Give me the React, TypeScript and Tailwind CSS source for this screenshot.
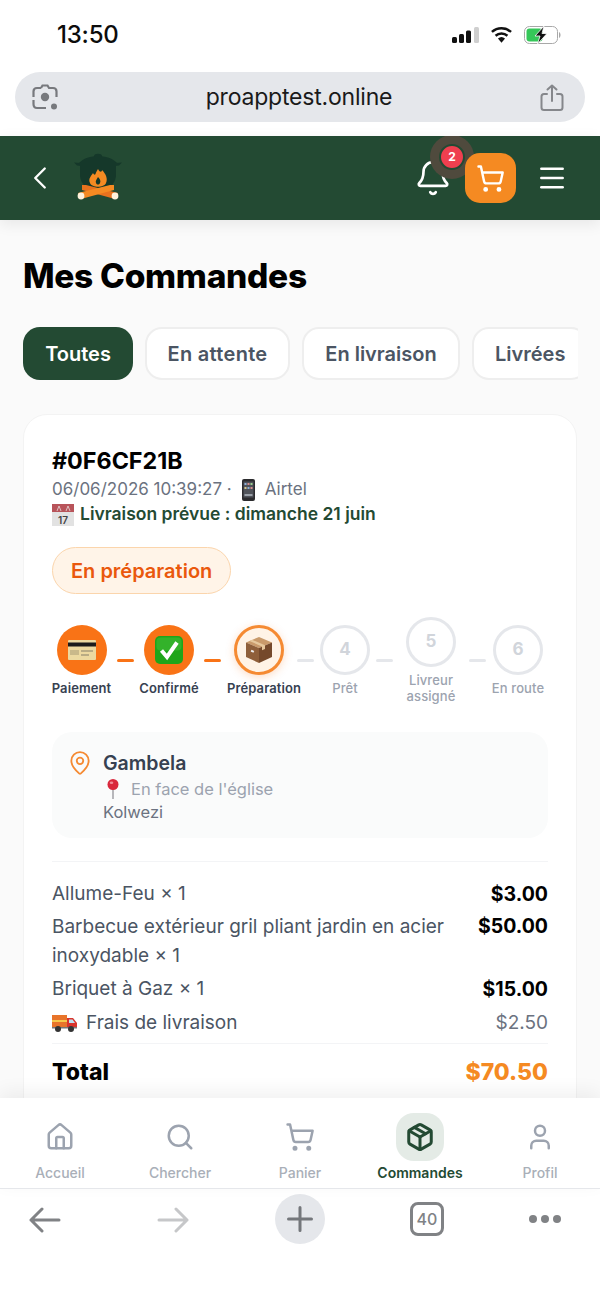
import React from 'react';
import { Bell, ChevronLeft, House, MapPin, Menu, Package, Search, ShoppingCart, User } from 'lucide-react';

const CardEmoji = () => (
  <svg viewBox="0 0 28 20" className="w-[28px] h-[20px]">
    <rect x="0" y="0" width="28" height="20" rx="1" fill="#ecd9a0" />
    <rect x="0" y="2.5" width="28" height="4" fill="#1b1b1b" />
    <rect x="2" y="10" width="9" height="5" fill="#c9b98a" />
    <rect x="13" y="10" width="12" height="2" fill="#b9ac84" />
    <rect x="13" y="14" width="8" height="2" fill="#b9ac84" />
  </svg>
);

const CheckEmoji = () => (
  <svg viewBox="0 0 28 28" className="w-[28px] h-[28px]">
    <rect x="0" y="0" width="28" height="28" rx="5" fill="#1fa51a" />
    <rect x="1.5" y="1.5" width="25" height="13" rx="4" fill="#4cc43f" opacity="0.45" />
    <path d="M6.5 14.5 L12 21 L22 6.5" fill="none" stroke="#fff" strokeWidth="4" />
  </svg>
);

const BoxEmoji = () => (
  <svg viewBox="0 0 28 28" className="w-[28px] h-[28px]">
    <path d="M14 1 L27 6.5 L14 12 L1 6.5 Z" fill="#c99a6b" />
    <path d="M1 6.5 L14 12 L14 27 L1 21 Z" fill="#8f5f3a" />
    <path d="M27 6.5 L14 12 L14 27 L27 21 Z" fill="#75492b" />
    <path d="M7 3.7 L20 9.2 L20 13 L17 14.2 L17 10.4 L4.5 4.9 Z" fill="#e6c79c" />
    <rect x="6" y="14" width="3" height="2" fill="#eee" transform="rotate(24 7 15)" />
  </svg>
);

const PhoneEmoji = () => (
  <svg viewBox="0 0 14 22" className="w-[15px] h-[22px]">
    <rect x="0.5" y="0" width="13" height="22" rx="2" fill="#2b2b2e" />
    <rect x="2" y="2.5" width="10" height="16" fill="#50535a" />
    <rect x="3" y="4" width="2" height="2" fill="#8db0d8" />
    <rect x="6" y="4" width="2" height="2" fill="#d88d8d" />
    <rect x="9" y="4" width="2" height="2" fill="#9ccf8f" />
    <rect x="3" y="8" width="2" height="2" fill="#d8c98d" />
    <rect x="6" y="8" width="2" height="2" fill="#8db0d8" />
    <rect x="9" y="8" width="2" height="2" fill="#d88d8d" />
    <rect x="3" y="15" width="8" height="2" fill="#9aa0a8" />
  </svg>
);

const CalendarEmoji = () => (
  <svg viewBox="0 0 22 22" className="w-[22px] h-[22px]">
    <rect x="0" y="0" width="22" height="22" fill="#e2e2e2" />
    <rect x="0" y="0" width="22" height="8" fill="#b8545a" />
    <path d="M5 7 L7 2 L9 7 M14 7 L16 2 L18 7" fill="none" stroke="#e8e0e0" strokeWidth="0.8" />
    <text x="11" y="19.5" textAnchor="middle" fontSize="10" fontFamily="Inter, sans-serif" fill="#444">17</text>
  </svg>
);

const PinEmoji = () => (
  <svg viewBox="0 0 14 20" className="w-[14px] h-[20px]">
    <path d="M7 9 L7 20" stroke="#9a9aa0" strokeWidth="1.4" />
    <circle cx="7" cy="5.5" r="5.5" fill="#d9283c" />
    <ellipse cx="5.5" cy="3.8" rx="1.8" ry="1.2" fill="#f08a96" />
  </svg>
);

const TruckEmoji = () => (
  <svg viewBox="0 0 26 20" className="w-[26px] h-[20px]">
    <rect x="0" y="2" width="15" height="12" fill="#e8742a" />
    <rect x="0" y="7" width="15" height="2" fill="#f6c94a" />
    <path d="M15 5 H21 L25 10 V15 H15 Z" fill="#d8342c" />
    <path d="M17 6.5 H20.5 L23 10 H17 Z" fill="#bfe0f0" />
    <rect x="0" y="14" width="25" height="1.5" fill="#777" />
    <circle cx="6" cy="16" r="3" fill="#333" />
    <circle cx="19" cy="16" r="3" fill="#333" />
  </svg>
);

const Logo = () => (
  <svg viewBox="0 0 50 48" className="w-[50px] h-[48px]">
    <path d="M21 4 C21 1 29 1 29 4 L29 6 H21 Z" fill="#15382a" />
    <path d="M5 12 C10 6 18 4 25 4 C32 4 40 6 45 12 Z" fill="#15382a" />
    <path d="M1 10.5 L8 11 L8 14 L4 13.5 Z M49 10.5 L42 11 L42 14 L46 13.5 Z" fill="#15382a" />
    <path d="M7 12 H43 L43 24 C42 33 35 38 25 38 C15 38 8 33 7 24 Z" fill="#15382a" />
    <path d="M25 17 C27 21 29 20 29 18 C33 22 35 27 33 31 C31 36 19 36 17 31 C15 27 18 24 20 21 C21 23 22 23 22.5 22 C23 20 24 19 25 17 Z" fill="#f58a22" />
    <path d="M25 25 C27 27 28 29 27 31 C26 33 24 33 23 31 C22 29 24 27 25 25 Z" fill="#15382a" />
    <path d="M9 33 L13 33 L45 41 L42 47 L9 38 Z" fill="#e8721e" />
    <path d="M41 33 L37 33 L5 41 L8 47 L41 38 Z" fill="#f58a22" />
    <circle cx="8" cy="44" r="3.4" fill="#fff2dc" />
    <circle cx="42" cy="44" r="3.4" fill="#fff2dc" />
  </svg>
);

const STEPS = [
  { label: 'Paiement', width: 'w-[59px]', done: true, icon: <CardEmoji /> },
  { label: 'Confirmé', width: 'w-[58px]', done: true, icon: <CheckEmoji /> },
  { label: 'Préparation', width: 'w-[64px]', current: true, icon: <BoxEmoji /> },
  { label: 'Prêt', width: 'w-[50px]', num: '4' },
  { label: 'Livreur assigné', width: 'w-[64px]', num: '5' },
  { label: 'En route', width: 'w-[52px]', num: '6' },
];

const NAV = [
  { label: 'Accueil', Icon: House },
  { label: 'Chercher', Icon: Search },
  { label: 'Panier', Icon: ShoppingCart },
  { label: 'Commandes', Icon: Package, active: true },
  { label: 'Profil', Icon: User },
];

function StatusBar() {
  return (
    <div className="h-[72px] bg-white shrink-0 flex items-center justify-between pl-[57px] pr-[38px] pb-[3px]">
      <span className="text-[24px] font-medium text-[#0c0c0c] tracking-[-0.2px]">13:50</span>
      <div className="flex items-center gap-[11px]">
        <svg viewBox="0 0 27 16" className="w-[27px] h-[16px]">
          <rect x="0" y="10" width="5" height="6" rx="1.5" fill="#111" />
          <rect x="7" y="7" width="5" height="9" rx="1.5" fill="#111" />
          <rect x="14" y="3.5" width="5" height="12.5" rx="1.5" fill="#111" />
          <rect x="22" y="0" width="5" height="16" rx="1.5" fill="#cfcfcf" />
        </svg>
        <svg viewBox="0 0 24 18" className="w-[23px] h-[18px]">
          <path d="M12 17 L8.3 12.6 A5.6 5.6 0 0 1 15.7 12.6 Z" fill="#111" />
          <path d="M5.8 9.8 A9.5 9.5 0 0 1 18.2 9.8" fill="none" stroke="#111" strokeWidth="2.6" />
          <path d="M2 5.8 A15 15 0 0 1 22 5.8" fill="none" stroke="#111" strokeWidth="2.6" />
        </svg>
        <svg viewBox="0 0 38 18" className="w-[38px] h-[18px]">
          <rect x="0.5" y="0.5" width="33" height="17" rx="5" fill="none" stroke="#a8a8a8" />
          <rect x="2.5" y="2.5" width="16" height="13" rx="3" fill="#35c759" />
          <path d="M35 6 C37 7 37 11 35 12 Z" fill="#a8a8a8" />
          <path d="M20 0 L11 10 H16 L13.5 18 L23 7.5 H18 Z" fill="#111" stroke="#fff" strokeWidth="0.8" />
        </svg>
      </div>
    </div>
  );
}

function UrlBar() {
  return (
    <div className="h-[64px] bg-white shrink-0 px-[15px]">
      <div className="h-[50px] w-[570px] rounded-full bg-[#e5e7eb] flex items-center justify-between pl-[17px] pr-[21px]">
        <svg viewBox="0 0 26 26" className="w-[26px] h-[26px]" fill="none" stroke="#77797d" strokeWidth="2.2">
          <path d="M9 4 L10.5 1.5 H15.5 L17 4 H21 C23 4 24.5 5.5 24.5 7.5 V13 M1.5 13 V7.5 C1.5 5.5 3 4 5 4 H9 M1.5 16 V20 C1.5 22.5 3 24 5 24 H14" />
          <circle cx="13" cy="13" r="4.2" fill="#77797d" stroke="none" />
          <circle cx="22" cy="22.5" r="3" fill="#77797d" stroke="none" />
        </svg>
        <span className="text-[23px] text-[#1a1a1a] tracking-[-0.2px]">proapptest.online</span>
        <svg viewBox="0 0 24 27" className="w-[24px] h-[27px]" fill="none" stroke="#85878b" strokeWidth="2" strokeLinecap="round" strokeLinejoin="round">
          <path d="M7 10 H4 C2.5 10 1.5 11 1.5 12.5 V23.5 C1.5 25 2.5 26 4 26 H20 C21.5 26 22.5 25 22.5 23.5 V12.5 C22.5 11 21.5 10 20 10 H17" />
          <path d="M12 17 V1.5 M7.5 5.5 L12 1.5 L16.5 5.5" />
        </svg>
      </div>
    </div>
  );
}

function Header() {
  return (
    <header className="relative z-10 h-[84px] shrink-0 bg-[#234a33] flex items-center pl-[21px] pr-[32px] shadow-[0_4px_14px_rgba(0,0,0,0.08)] overflow-hidden">
      <ChevronLeft className="w-[38px] h-[38px] text-white" strokeWidth={1.5} />
      <div className="ml-[14px] -mt-[4px]">
        <Logo />
      </div>
      <div className="ml-auto relative mr-[13px]">
        <Bell className="w-[38px] h-[38px] text-white" strokeWidth={1.7} />
        <div className="absolute left-[16px] -top-[24px] w-[44px] h-[44px] rounded-full bg-[#4f4a3d] flex items-center justify-center">
          <div className="w-[22px] h-[22px] rounded-full bg-[#ef3f4f] border-2 border-[#234a33] box-content flex items-center justify-center text-white text-[12px] font-bold">
            2
          </div>
        </div>
      </div>
      <div className="relative w-[51px] h-[50px] rounded-[15px] bg-[#f58a22] flex items-center justify-center">
        <ShoppingCart className="w-[29px] h-[29px] text-white" strokeWidth={2} />
      </div>
      <Menu className="ml-[20px] w-[32px] h-[32px] text-white" strokeWidth={1.9} />
    </header>
  );
}

function Tabs() {
  return (
    <div className="mt-[32px] w-[555px] overflow-hidden flex gap-[12px] text-[20px] font-semibold">
      <div className="h-[53px] w-[110px] shrink-0 rounded-[17px] bg-[#234a33] text-white flex items-center justify-center">Toutes</div>
      <div className="h-[53px] w-[145px] shrink-0 rounded-[17px] bg-white border-2 border-[#eeeeee] text-[#4b5563] flex items-center justify-center tracking-[0.3px]">En attente</div>
      <div className="h-[53px] w-[158px] shrink-0 rounded-[17px] bg-white border-2 border-[#eeeeee] text-[#4b5563] flex items-center justify-center">En livraison</div>
      <div className="h-[53px] shrink-0 px-[21px] rounded-[17px] bg-white border-2 border-[#eeeeee] text-[#4b5563] flex items-center">Livrées</div>
    </div>
  );
}

function Stepper() {
  return (
    <div className="mt-[23px] flex items-center gap-[6px]">
      {STEPS.map((step, i) => (
        <React.Fragment key={step.label}>
          {i > 0 && (
            <div className={`w-[17px] h-[3px] rounded-full shrink-0 ${i < 3 ? 'bg-[#f97316]' : 'bg-[#e5e7eb]'}`} />
          )}
          <div className={`${step.width} shrink-0 flex flex-col items-center`}>
            {step.done && (
              <div className="w-[50px] h-[50px] rounded-full bg-[#f97316] flex items-center justify-center">{step.icon}</div>
            )}
            {step.current && (
              <div className="w-[50px] h-[50px] rounded-full border-[3px] border-[#f58a32] bg-[#fff3e6] shadow-[0_2px_8px_rgba(249,115,22,0.25)] flex items-center justify-center">
                {step.icon}
              </div>
            )}
            {step.num && (
              <div className="w-[50px] h-[50px] rounded-full border-[3px] border-[#e5e7eb] bg-white flex items-center justify-center text-[17px] font-bold text-[#d1d5db]">
                {step.num}
              </div>
            )}
            <span
              className={`mt-[5px] text-[13px] leading-[16px] text-center tracking-[0.1px] ${
                step.num ? 'font-medium text-[#9ca3af]' : 'font-semibold text-[#374151]'
              } ${step.label === 'Livreur assigné' ? '' : 'whitespace-nowrap'} ${step.current ? 'self-start' : ''}`}
            >
              {step.label}
            </span>
          </div>
        </React.Fragment>
      ))}
    </div>
  );
}

function OrderCard() {
  return (
    <div className="mt-[34px] w-[554px] rounded-[24px] bg-white border border-[#f3f3f3] px-[28px] pt-[31px] pb-[40px]">
      <div className="text-[23.3px] leading-[29px] font-bold text-black">#0F6CF21B</div>
      <div className="mt-[2px] flex items-center h-[25px] text-[17px] text-[#6b7280]">
        <span>06/06/2026 10:39:27 ·</span>
        <span className="ml-[9px]"><PhoneEmoji /></span>
        <span className="ml-[9px]">Airtel</span>
      </div>
      <div className="flex items-center h-[25px] text-[17.5px] font-semibold text-[#234a33]">
        <CalendarEmoji />
        <span className="ml-[6px]">Livraison prévue : dimanche 21 juin</span>
      </div>
      <div className="mt-[20px] inline-flex h-[47px] items-center px-[18px] rounded-full bg-[#fff4e8] border border-[#fbd5ac] text-[#ea580c] text-[20px] font-semibold">
        En préparation
      </div>
      <Stepper />
      <div className="mt-[28px] h-[106px] rounded-[20px] bg-[#fafbfb] pl-[15px] pt-[17px] flex">
        <MapPin className="w-[26px] h-[26px] text-[#f58a32] mt-[1px]" strokeWidth={1.7} />
        <div className="ml-[10px]">
          <div className="text-[19.5px] leading-[28px] font-semibold text-[#374151]">Gambela</div>
          <div className="flex items-center h-[24px] text-[16.5px] text-[#9ca3af]">
            <span className="ml-[3px]"><PinEmoji /></span>
            <span className="ml-[11px]">En face de l'église</span>
          </div>
          <div className="text-[16.5px] leading-[22px] text-[#6b7280]">Kolwezi</div>
        </div>
      </div>
      <div className="mt-[23px] border-t border-[#f3f4f6] pt-[16px] text-[19px] text-[#4b5563]">
        <div className="flex justify-between leading-[32px]">
          <span>Allume-Feu × 1</span>
          <span className="font-bold text-black text-[19.5px]">$3.00</span>
        </div>
        <div className="flex justify-between leading-[29px] mt-[2px]">
          <span className="w-[410px]">Barbecue extérieur gril pliant jardin en acier inoxydable × 1</span>
          <span className="font-bold text-black text-[19.5px]">$50.00</span>
        </div>
        <div className="flex justify-between leading-[32px] mt-[3px]">
          <span>Briquet à Gaz × 1</span>
          <span className="font-bold text-black text-[19.5px]">$15.00</span>
        </div>
        <div className="flex justify-between items-center h-[35px] pt-[1px]">
          <span className="flex items-center">
            <TruckEmoji />
            <span className="ml-[8px]">Frais de livraison</span>
          </span>
          <span className="text-[#6b7280]">$2.50</span>
        </div>
        <div className="mt-[3px] border-t border-[#f3f4f6] pt-[11px] flex justify-between items-center">
          <span className="text-[23px] font-extrabold text-black">Total</span>
          <span className="text-[23px] font-extrabold text-[#f58a22]">$70.50</span>
        </div>
      </div>
    </div>
  );
}

function BottomNav() {
  return (
    <nav className="relative z-10 h-[91px] shrink-0 bg-white border-b border-[#e5e7eb] shadow-[0_-6px_18px_rgba(0,0,0,0.06)] flex pt-[15px]">
      {NAV.map(({ label, Icon, active }) => (
        <div key={label} className="w-[120px] flex flex-col items-center">
          <div className={`w-[48px] h-[48px] rounded-[18px] flex items-center justify-center ${active ? 'bg-[#e4ebe6]' : ''}`}>
            <Icon className={`w-[30px] h-[30px] ${active ? 'text-[#234a33]' : 'text-[#9ca3af]'}`} strokeWidth={active ? 2.4 : 2} />
          </div>
          <span className={`mt-[3px] text-[14px] leading-[18px] ${active ? 'font-semibold text-[#234a33]' : 'font-medium text-[#a9afb8]'}`}>
            {label}
          </span>
        </div>
      ))}
    </nav>
  );
}

function BrowserBar() {
  return (
    <div className="flex-1 bg-white flex items-start pt-[5px] pl-[29px]">
      <svg viewBox="0 0 32 26" className="mt-[13px] w-[32px] h-[26px]" fill="none" stroke="#808285" strokeWidth="3" strokeLinecap="round" strokeLinejoin="round">
        <path d="M30 13 H2 M13 2 L2 13 L13 24" />
      </svg>
      <svg viewBox="0 0 32 26" className="mt-[13px] ml-[96px] w-[32px] h-[26px]" fill="none" stroke="#c6c7c9" strokeWidth="3" strokeLinecap="round" strokeLinejoin="round">
        <path d="M2 13 H30 M19 2 L30 13 L19 24" />
      </svg>
      <div className="ml-[86px] w-[50px] h-[50px] rounded-full bg-[#e5e7eb] flex items-center justify-center">
        <svg viewBox="0 0 26 26" className="w-[26px] h-[26px]" fill="none" stroke="#74777b" strokeWidth="3" strokeLinecap="round">
          <path d="M13 1.5 V24.5 M1.5 13 H24.5" />
        </svg>
      </div>
      <div className="ml-[85px] mt-[8px] w-[34px] h-[34px] rounded-[8px] border-[3px] border-[#808285] flex items-center justify-center text-[16px] font-medium text-[#808285]">
        40
      </div>
      <div className="ml-[85px] mt-[21px] flex gap-[4px]">
        <div className="w-[8px] h-[8px] rounded-full bg-[#808285]" />
        <div className="w-[8px] h-[8px] rounded-full bg-[#808285]" />
        <div className="w-[8px] h-[8px] rounded-full bg-[#808285]" />
      </div>
    </div>
  );
}

export default function App() {
  return (
    <div className="w-[600px] h-[1298px] overflow-hidden flex flex-col bg-white font-['Inter',sans-serif]">
      <StatusBar />
      <UrlBar />
      <Header />
      <main className="h-[878px] shrink-0 overflow-hidden bg-[#fafafa] pl-[23px] pt-[37px]">
        <h1 className="text-[33.5px] leading-[38px] font-extrabold text-black tracking-[-0.3px]">Mes Commandes</h1>
        <Tabs />
        <OrderCard />
      </main>
      <BottomNav />
      <BrowserBar />
    </div>
  );
}
